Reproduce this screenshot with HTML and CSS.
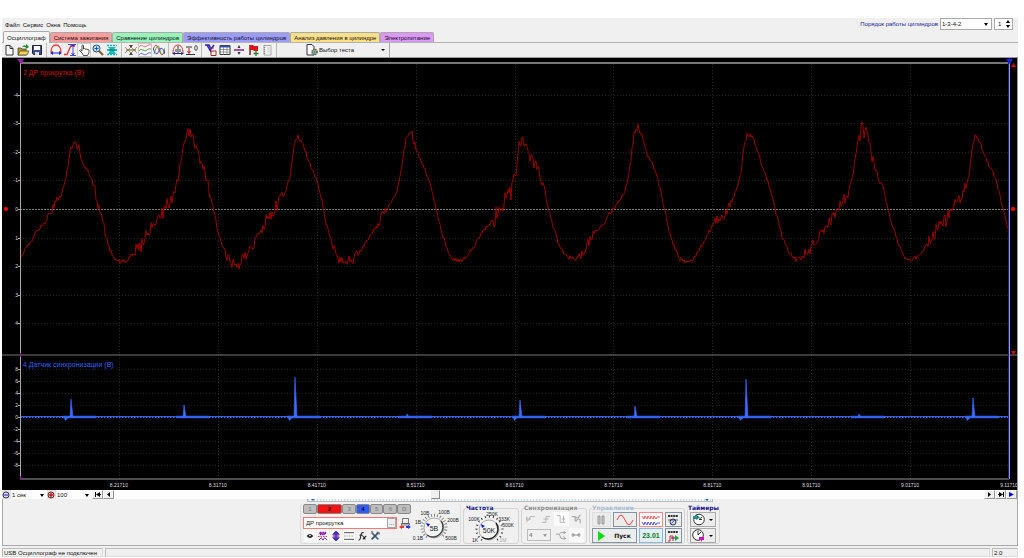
FILE: index.html
```html
<!DOCTYPE html>
<html lang="ru">
<head>
    <meta charset="UTF-8">
    <meta name="viewport" content="width=device-width, initial-scale=1.0">
    <title>USB Осциллограф</title>
    <link rel="stylesheet" href="styles.css">
</head>
<body>
    <div class="app">
        <header class="topbar">
            <nav class="menu">
                <a href="#">Файл</a>
                <a href="#">Сервис</a>
                <a href="#">Окна</a>
                <a href="#">Помощь</a>
            </nav>
            <div class="order">
                <label for="order">Порядок работы цилиндров</label>
                <span class="select order__select">
                    <select id="order"><option>1-3-4-2</option></select>
                </span>
                <span class="spin">
                    <input type="text" value="1" aria-label="Номер цилиндра">
                    <svg width="4" height="8" viewBox="0 0 4 8"><path d="M0 3 2 0 4 3zM0 5 2 8 4 5z"/></svg>
                </span>
            </div>
        </header>

        <div class="tabs">
            <button class="tab tab--active">Осциллограф</button>
            <button class="tab tab--red">Система зажигания</button>
            <button class="tab tab--green">Сравнение цилиндров</button>
            <button class="tab tab--blue">Эффективность работы цилиндров</button>
            <button class="tab tab--yellow">Анализ давления в цилиндре</button>
            <button class="tab tab--violet">Электропитание</button>
        </div>

        <div class="toolbar">
            <div class="toolbar__group">
                <button class="tool" aria-label="Новый"><svg viewBox="0 0 12 12"><path d="M3 1.500h4l3 3v6.500H3z" fill="#fff" stroke="#333"/><path d="M7 1.500v3h3" fill="none" stroke="#333"/></svg></button>
                <button class="tool" aria-label="Открыть"><svg viewBox="0 0 12 12"><path d="M1 11V4h3l1 1h4v6z" fill="#b99a1c" stroke="#333" stroke-width=".7"/><path d="M1 11 3 7h9l-2 4z" fill="#f4d34c" stroke="#333" stroke-width=".7"/><path d="M5 3q2-3 4-1V0l3 3-3 2V3.500Q7 2.500 5 3z" fill="#1a8b2d"/></svg></button>
                <button class="tool" aria-label="Сохранить"><svg viewBox="0 0 12 12"><path d="M1.500 1.500h9v9h-8l-1-1z" fill="#40508c" stroke="#223"/><path d="M3 2h6v4H3z" fill="#fff"/><path d="M4 8h4v3H4z" fill="#ddd"/></svg></button>
            </div>
            <div class="toolbar__group">
                <button class="tool" aria-label="Ширина"><svg viewBox="0 0 12 12"><path d="M1 8C1 4 3 1 6 1s5 3 5 7" fill="none" stroke="#f33" stroke-width="1.300"/><path d="M0 9l3-2v1.500h6V7l3 2-3 2V9.500H3V11z" fill="#22c"/></svg></button>
                <button class="tool" aria-label="Высота"><svg viewBox="0 0 12 12"><path d="M0 10.500h3L7 1.500h4" fill="none" stroke="#f33" stroke-width="1.300"/><path d="M9 1v10M7.500 3 9 1l1.500 2M7.500 9 9 11l1.500-2M6 11.500h6M4 .5h8" fill="none" stroke="#22c" stroke-width=".8"/></svg></button>
                <button class="tool tool--on" aria-label="Рука"><svg viewBox="0 0 12 12"><path d="M4 9 1.500 6.500q.5-1.500 2.500.500V1.500q1-1 1.500 0V5q1-1 1.700.200Q8.500 4.500 9 5.500q1.500-.5 2 .500v2.500L9.500 11.500h-4z" fill="#fff" stroke="#222" stroke-width=".8"/></svg></button>
                <button class="tool" aria-label="Лупа"><svg viewBox="0 0 12 12"><circle cx="4.500" cy="4.500" r="3.500" fill="#bfe5ff" stroke="#234a7c"/><path d="M7 7l4 4" stroke="#8a5520" stroke-width="2"/><path d="M2.500 4.500h4M4.500 2.500v4" stroke="#15a"/></svg></button>
                <button class="tool" aria-label="Сжать"><svg viewBox="0 0 12 12"><path d="M1 1.500h10M1 10.500h10" stroke="#1bb" stroke-width="1.500" stroke-dasharray="2 1"/><path d="M2 3h8L8 5h3v2H8l2 3H2l2-3H1V5h3z" fill="#13b9c4"/><path d="M3 6h6" stroke="#186a2a"/></svg></button>
            </div>
            <div class="toolbar__group">
                <button class="tool" aria-label="Центр"><svg viewBox="0 0 12 12"><path d="M0 3l3 3-3 3M12 3 9 6l3 3M3 6l3-3 3 3-3 3z" fill="none" stroke="#d66" stroke-width=".8"/><path d="M1 6h10" stroke="#282"/><path d="M4 1h4L6 4zM4 11h4L6 8z" fill="#444"/></svg></button>
                <button class="tool tool--on" aria-label="Слои"><svg viewBox="0 0 12 12"><path d="M0 3q2-3 4-1t4 0 4-1" fill="none" stroke="#e55" stroke-width=".8"/><path d="M0 7q2-3 4-1t4 0 4-1" fill="none" stroke="#292" stroke-width=".8"/><path d="M0 11q2-3 4-1t4 0 4-1" fill="none" stroke="#44d" stroke-width=".8"/></svg></button>
                <button class="tool" aria-label="Наложение"><svg viewBox="0 0 12 12"><path d="M0 6q3-10 6 0t6 0" fill="none" stroke="#e33" stroke-width=".9"/><path d="M1 10Q5-4 7 6t5-2" fill="none" stroke="#292" stroke-width=".7"/><path d="M0 4q3 10 6 3t6 3" fill="none" stroke="#33d" stroke-width=".9"/></svg></button>
            </div>
            <div class="toolbar__group">
                <button class="tool" aria-label="Маркеры"><svg viewBox="0 0 12 12"><path d="M1 9C1 4 3 1 6 1s5 3 5 8" fill="none" stroke="#d33"/><path d="M6 2v7M4 8V5M8 8V5" stroke="#333"/><path d="M0 9.500 3 8v1h6V8l3 1.500L9 11v-1H3v1z" fill="#229"/></svg></button>
                <button class="tool" aria-label="Ноль"><svg viewBox="0 0 12 12"><path d="M0 3h6M0 10.500h9" stroke="#333"/><path d="M3 4v5M1.500 7 3 9.500 4.500 7" fill="none" stroke="#b22"/><ellipse cx="10" cy="4" rx="1.300" ry="2.500" fill="none" stroke="#333" stroke-width=".8"/></svg></button>
            </div>
            <div class="toolbar__group">
                <button class="tool" aria-label="Фильтр"><svg viewBox="0 0 12 12"><path d="M0 1h4l2 4 3-4M2 1l4 7" fill="none" stroke="#22c" stroke-width="1.500"/><path d="M5 4h4" stroke="#d22"/><path d="M6 7h5v4.500H6z" fill="#fff" stroke="#a22"/></svg></button>
                <button class="tool" aria-label="Таблица"><svg viewBox="0 0 12 12"><path d="M1 1.500h10v9H1z" fill="#fff" stroke="#333"/><path d="M1 2.500h10" stroke="#35a" stroke-width="2"/><path d="M1 5.500h10M1 8h10M4.500 3v8M8 3v8" stroke="#777" stroke-width=".7"/></svg></button>
                <button class="tool" aria-label="Разделить"><svg viewBox="0 0 12 12"><path d="M1 6h10" stroke="#829" stroke-width="1.500"/><path d="M4.500 4h3L6 1zM4.500 8h3L6 11z" fill="#333"/></svg></button>
                <button class="tool" aria-label="Флаг"><svg viewBox="0 0 12 12"><path d="M3 1v10" stroke="#700" stroke-width="1.300"/><path d="M3 1h3l1 1h4v5H7L6 6H3z" fill="#e0101a"/><path d="M6.500 9.500h5M9 7v5" stroke="#1a8b2d" stroke-width="1.300"/></svg></button>
                <button class="tool" aria-label="Журнал"><svg viewBox="0 0 12 12"><path d="M3 1.500h7v9.500H3z" fill="#f6f6f6" stroke="#aaa"/><path d="M3.500 1v10" stroke="#888" stroke-width="1.500" stroke-dasharray="1 1"/><path d="M6 4h3M6 6h3M6 8h3" stroke="#ccc"/></svg></button>
            </div>
            <button class="test">
                <svg width="12" height="12" viewBox="0 0 12 12"><path d="M1 .5h5l2 2v8.500H1z" fill="#fff" stroke="#333"/><circle cx="8.500" cy="8" r="2.500" fill="#bcb" stroke="#4a6552" stroke-dasharray="1.500 .5" stroke-width="1.500"/><circle cx="8.500" cy="8" r="1" fill="#465"/></svg>
                <span>Выбор теста</span>
                <i class="caret"></i>
            </button>
        </div>

        <svg class="scope" id="scope"></svg>

        <div class="scroll">
            <button class="scroll__zoom" aria-label="Уменьшить"><svg width="8" height="8" viewBox="0 0 8 8"><circle cx="4" cy="4" r="3" fill="#dde" stroke="#336"/><path d="M2 4h4" stroke="#22a"/></svg></button>
            <span class="select scroll__select"><select aria-label="Развёртка"><option>1 сек</option></select></span>
            <button class="scroll__zoom" aria-label="Увеличить"><svg width="8" height="8" viewBox="0 0 8 8"><circle cx="4" cy="4" r="3" fill="#fdd" stroke="#522"/><path d="M2 4h4M4 2v4" stroke="#c11" stroke-width="1.500"/></svg></button>
            <span class="select scroll__select"><select aria-label="Масштаб"><option>100</option></select></span>
            <button class="scroll__btn" aria-label="В начало"><svg width="6" height="5" viewBox="0 0 6 5"><path d="M0 0h1v5H0zM5 0v5L1 2.500zM5 2h1v1H5z"/></svg></button>
            <button class="scroll__btn" aria-label="Назад"><svg width="3" height="5" viewBox="0 0 3 5"><path d="M3 0v5L0 2.500z"/></svg></button>
            <input class="scroll__bar" type="range" min="0" max="1000" value="368" aria-label="Позиция">
            <button class="scroll__btn" aria-label="Вперёд"><svg width="3" height="5" viewBox="0 0 3 5"><path d="M0 0v5l3-2.500z"/></svg></button>
            <button class="scroll__btn" aria-label="В конец"><svg width="6" height="5" viewBox="0 0 6 5"><path d="M5 0h1v5H5zM1 0v5l4-2.500zM0 2h1v1H0z"/></svg></button>
            <button class="scroll__btn" aria-label="Воспроизвести"><svg width="5" height="5" viewBox="0 0 5 5"><path d="M0 0v5l5-2.500z" fill="#00f"/></svg></button>
        </div>

        <div class="panel">
            <div class="splitter"><i></i><i></i></div>
            <div class="controls">
                <section class="channel">
                    <div class="channel__main">
                        <div class="channel__tabs">
                            <button>1</button><button class="is-red">2</button><button>3</button><button class="is-blue">4</button><button>5</button><button>6</button><button>D</button>
                        </div>
                        <div class="channel__row">
                            <div class="channel__name">
                                <input type="text" value="ДР прокрутка" aria-label="Название канала">
                                <button>...</button>
                            </div>
                            <svg width="12" height="12" viewBox="0 0 12 12"><path d="M3.500 1.500h6v5h-6zM2.500 6.500h8v1.500h-8z" fill="#eee" stroke="#555" stroke-width=".8"/><path d="M5 9v2H3v1L0 10l3-2v1z" fill="#e33"/><path d="M7 9v2h2v1l3-2-3-2v1z" fill="#33d"/></svg>
                        </div>
                        <div class="channel__tools">
                            <button class="on" aria-label="Видимость"><svg viewBox="0 0 12 12"><path d="M2 6q4-5 8 0-4 5-8 0z" fill="#222"/><circle cx="6" cy="5.500" r="1" fill="#fff"/></svg></button>
                            <button class="on" aria-label="Сглаживание"><svg viewBox="0 0 12 12"><path d="M1 4l2-3v4l2-4v4l2-4v4l2-4v3" fill="none" stroke="#70a"/><path d="M0 6.500h12" stroke="#c22" stroke-dasharray="2 1"/><path d="M1 11l3-3 2 3 2-3 3 3" fill="none" stroke="#70a"/></svg></button>
                            <button class="on" aria-label="Инверсия"><svg viewBox="0 0 12 12"><path d="M6 0l4 4H7v4h3l-4 4-4-4h3V4H2z" fill="#33d" stroke="#33d"/><path d="M2 6h8" stroke="#d22" stroke-width="1.500"/></svg></button>
                            <button class="on" aria-label="Линии"><svg viewBox="0 0 12 12"><path d="M0 2h12M0 10h12" stroke="#333"/><path d="M0 6h12" stroke="#777" stroke-dasharray="1 1"/></svg></button>
                            <button aria-label="Функция"><svg viewBox="0 0 12 12"><path d="M2 11q2 0 2.500-5T8 2M3 5h4M7 6l3 4M11 6 7 10" fill="none" stroke="#222" stroke-width="1.300"/></svg></button>
                            <button aria-label="Настройка"><svg viewBox="0 0 12 12"><path d="M2 2l8 8" stroke="#567" stroke-width="2"/><path d="M10 2 2 10" stroke="#35506c" stroke-width="2"/><path d="M1 1h3M8 1.500h3v3" fill="none" stroke="#456"/></svg></button>
                        </div>
                    </div>
                    <svg class="dial" width="48" height="38" viewBox="0 0 48 38">
                        <path d="M16 33A12 12 0 1 1 30 33" fill="none" stroke="#888" stroke-width="3" stroke-dasharray="1 2"/><circle cx="23" cy="24" r="10" fill="#f5f5f5" stroke="#aaa"/><path d="M30 17A10 10 0 0 1 16 31" fill="none" stroke="#444" stroke-width="1.500"/>
                        <path d="M15 19l4 1-2 3z" fill="#11f"/>
                        <text class="dial__value" x="23" y="27">5В</text>
                        <text x="14" y="11">10В</text><text x="33" y="10">100В</text><text x="7" y="20">1В</text><text x="42" y="18">200В</text><text x="7" y="36">0.1В</text><text x="40" y="36">500В</text>
                    </svg>
                </section>

                <fieldset class="box">
                    <legend>Частота</legend>
                    <svg class="dial" width="50" height="32" viewBox="0 0 50 32">
                        <path d="M16 28A13 13 0 1 1 31 28" fill="none" stroke="#333" stroke-width="2" stroke-dasharray="1 3"/><circle cx="23" cy="18" r="10" fill="#f5f5f5" stroke="#aaa"/><path d="M30 11A10 10 0 0 1 16 25" fill="none" stroke="#222" stroke-width="1.500"/>
                        <path d="M15 12l4 2-3 2z" fill="#11f"/>
                        <text class="dial__value" x="23" y="21">50K</text>
                        <text x="26" y="4">250K</text><text x="8" y="9">100K</text><text x="38" y="9">333K</text><text x="42" y="15">500K</text><text x="9" y="30">1K</text><text class="dim" x="37" y="30">1M</text>
                    </svg>
                </fieldset>

                <fieldset class="box box--dim" disabled>
                    <legend>Синхронизация</legend>
                    <div class="sync">
                        <button aria-label="Фронт"><svg viewBox="0 0 12 12"><path d="M1 3v6q3-1 4-6h6M0 6h6" fill="none" stroke="#aaa"/></svg></button>
                        <button aria-label="Подъём"><svg viewBox="0 0 12 12"><path d="M1 10h5V3h5M3 6h6" fill="none" stroke="#aaa"/></svg></button>
                        <button class="on" aria-label="Спад"><svg viewBox="0 0 12 12"><path d="M1 2h4v8h6M9 2v7M7 6h4" fill="none" stroke="#aaa"/></svg></button>
                        <button aria-label="Ручная"><svg viewBox="0 0 12 12"><path d="M1 3h4v6M6 9l5-8M6 4l5 3v4" fill="none" stroke="#aaa" stroke-width="1.500"/></svg></button>
                        <span class="select sync__select"><select aria-label="Канал синхронизации"><option>4</option></select></span>
                        <button aria-label="Уровень"><svg viewBox="0 0 12 12"><path d="M0 5h4l2-2h6M4 5l2 5h6M9 1l2 2-2 2M9 8l2 2-2 2" fill="none" stroke="#999"/></svg></button>
                        <button class="on" aria-label="Сдвиг"><svg viewBox="0 0 12 12"><path d="M0 6h12M2 4l3 2-3 2zM10 4 7 6l3 2z" fill="#aaa" stroke="#aaa"/></svg></button>
                    </div>
                </fieldset>

                <fieldset class="box box--run">
                    <legend>Управление</legend>
                    <div class="run">
                        <button class="off" aria-label="Пауза"><svg width="8" height="10" viewBox="0 0 8 10"><path d="M1 1h2v8H1zM5 1h2v8H5z" fill="#ccc" stroke="#999"/></svg></button>
                        <button aria-label="Синус"><svg width="18" height="12" viewBox="0 0 18 12"><path d="M1 6q4-10 8 0t8 0" fill="none" stroke="#f44"/></svg></button>
                        <button class="run__red" aria-label="Поток"><svg width="20" height="12" viewBox="0 0 20 12"><path d="M1 2l2 3 1-3 2 3 1-3 2 3 1-3 2 3 1-3 2 3 1-2h3" fill="none" stroke="#e33" stroke-width=".8"/><path d="M1 8l2 3 1-3 2 3 1-3 2 3 1-3 2 3 1-3 2 3 1-2h3" fill="none" stroke="#33d" stroke-width=".8"/></svg></button>
                        <button aria-label="Авто"><svg width="12" height="12" viewBox="0 0 12 12"><path d="M1 2h10" stroke="#333" stroke-width="2" stroke-dasharray="2 .6"/><circle cx="6" cy="8" r="3" fill="#cde" stroke="#335"/><path d="M1 6h10M4.500 9.500l3-3" stroke="#335" stroke-width=".8"/></svg></button>
                        <button class="run__start"><svg width="7" height="10" viewBox="0 0 7 10"><path d="M0 0v10l7-5z" fill="#0d1"/></svg>Пуск</button>
                        <button class="run__time">23.01</button>
                        <button aria-label="Автозапуск"><svg width="12" height="12" viewBox="0 0 12 12"><path d="M1 2h10" stroke="#333" stroke-width="2" stroke-dasharray="2 .6"/><path d="M1 11h2V6h3v5" fill="none" stroke="#d22"/><path d="M4 8h4" stroke="#22c"/><path d="M8 5v6l4-3z" fill="#1a3"/></svg></button>
                    </div>
                </fieldset>

                <fieldset class="box box--timers">
                    <legend>Таймеры</legend>
                    <div class="timers">
                        <button aria-label="Таймер старта"><svg width="13" height="13" viewBox="0 0 13 13"><circle cx="7" cy="6.500" r="5.300" fill="#fff" stroke="#333"/><path d="M7 6.500 10 4M7 6.500h3" stroke="#333"/><path d="M1 3h3V1l4 3.500L4 7V6H1z" fill="#2a8c86"/></svg><i class="caret"></i></button>
                        <button aria-label="Таймер остановки"><svg width="13" height="13" viewBox="0 0 13 13"><circle cx="6" cy="6" r="5.300" fill="#fff" stroke="#333"/><path d="M6 6l3-3M6 6V2" stroke="#333"/><path d="M7 8h5v3h-2l-.5 2-1-2H7z" fill="#c1b"/></svg><i class="caret"></i></button>
                    </div>
                </fieldset>
            </div>
        </div>

        <footer class="status">
            <span class="status__text">USB Осциллограф не подключен</span>
            <span class="status__fill"></span>
            <span class="status__version">2.0</span>
        </footer>
    </div>
    <script src="script.js"></script>
</body>
</html>
```
FILE: styles.css
```css
* {
    margin: 0;
    padding: 0;
    box-sizing: border-box;
}

body {
    background: #fff;
    font-family: "Liberation Sans", Arial, sans-serif;
    font-size: 6px;
    line-height: 8px;
    color: #111;
}

button,
input,
select {
    font: inherit;
    color: inherit;
    border: 0;
    border-radius: 0;
    background: none;
    min-width: 0;
    appearance: none;
    outline: none;
}

a {
    color: inherit;
    text-decoration: none;
}

svg {
    display: block;
    flex: none;
}

.app {
    margin: 18px 6px 0 2px;
    background: #f0f0f0;
}

.caret {
    border: 2px solid transparent;
    border-top-color: #000;
    border-bottom: 0;
}

.select {
    position: relative;
    display: block;
}

.select select {
    display: block;
    width: 100%;
    height: 100%;
    padding-left: 1px;
}

.select::after {
    content: '';
    position: absolute;
    right: 3px;
    top: 4px;
    border: 2px solid transparent;
    border-top: 3px solid #000;
    border-bottom: 0;
    pointer-events: none;
}

/* Menu and cylinder order */
.topbar {
    display: flex;
    justify-content: space-between;
    height: 13px;
}

.menu {
    display: flex;
    gap: 3px;
    padding: 3px;
}

.order {
    display: flex;
    gap: 2px;
    padding-right: 5px;
    height: 12px;
}

.order label {
    color: #22229c;
    padding-top: 2px;
}

.order__select {
    width: 52px;
    border: 1px solid #aaa;
    background: #fff;
}

.spin {
    display: flex;
    align-items: center;
    width: 19px;
    border: 1px solid #aaa;
    background: #fff;
}

.spin input {
    width: 11px;
    padding-left: 3px;
}

/* Tabs */
.tabs {
    display: flex;
    height: 12px;
    padding-left: 1px;
    align-items: flex-end;
    border-bottom: 1px solid #b4b4b4;
}

.tab {
    height: 10px;
    padding: 0 3px;
    border: 1px solid #aaa;
    border-bottom: 0;
    border-radius: 2px 2px 0 0;
    white-space: nowrap;
}

.tab--active {
    height: 12px;
    margin-bottom: -1px;
    background: #f6f6f6;
}

.tab--red { background: #ff9c9c; }
.tab--green { background: #98f3ba; }
.tab--blue { background: #9c9cff; }
.tab--yellow { background: #ffdf87; }
.tab--violet { background: #dc97fa; }

/* Toolbar */
.toolbar {
    display: flex;
    height: 15px;
    border-bottom: 1px solid #999;
}

.toolbar__group {
    display: flex;
    padding-right: 2px;
    margin-right: 2px;
    border-right: 1px solid #bbb;
}

.tool {
    width: 14px;
    height: 14px;
    padding: 1px;
}

.tool svg {
    width: 12px;
    height: 12px;
}

.tool--on {
    background: #fafafa;
    border: 1px solid #ccc;
    padding: 0;
}

.test {
    display: flex;
    align-items: center;
    gap: 1px;
    width: 111px;
    padding: 0 4px 0 27px;
    border-right: 1px solid #aaa;
}

.test .caret {
    margin-left: auto;
}

/* Scope */
.scope {
    width: 100%;
    height: 432px;
    background: #000;
    border-right: 1px solid #999;
}

.scope text {
    font-size: 5px;
    fill: #ddd;
}

.scope .scope__title {
    font-size: 7px;
}

/* Scroll row */
.scroll {
    display: flex;
    height: 9px;
    background: #fdfdfd;
    border-right: 1px solid #aaa;
}

.scroll__zoom {
    width: 9px;
    background: #e4e4e4;
}

.scroll__select {
    width: 36px;
}

.scroll__btn {
    display: flex;
    align-items: center;
    justify-content: center;
    width: 11px;
    background: #f0f0f0;
    border: 1px solid #fff;
    border-right-color: #999;
    border-bottom-color: #999;
}

.scroll__bar {
    flex: 1;
    height: 9px;
}

.scroll__bar::-webkit-slider-thumb {
    appearance: none;
    width: 9px;
    height: 9px;
    background: #f0f0f0;
    border: 1px solid #eee;
    border-right-color: #888;
    border-bottom-color: #888;
}

/* Bottom panel */
.panel {
    border: 1px solid #aaa;
    border-width: 0 1px 1px;
    padding-bottom: 1px;
}

.splitter {
    display: flex;
    justify-content: space-between;
    align-items: center;
    width: 406px;
    max-width: 100%;
    height: 3px;
    margin: 0 auto 2px;
    padding: 0 3px;
    border: 1px solid #bbb;
    border-width: 0 1px 1px;
    background: repeating-linear-gradient(90deg, #c3dbf5 0 1px, #f2f7fd 1px 3px);
}

.splitter i {
    border: 2px solid transparent;
    border-top-color: #27c;
    border-bottom: 0;
}

.controls {
    display: flex;
    justify-content: center;
    gap: 2px;
    height: 40px;
}

.channel {
    display: flex;
    width: 161px;
    border: 1px solid #ddd;
    border-top: 0;
    padding: 0 2px;
    border-radius: 3px;
}

.channel__main {
    width: 110px;
}

.channel__tabs {
    display: flex;
}

.channel__tabs button {
    flex: 1;
    height: 10px;
    background: #bdbdbd;
    border: 1px solid #888;
    border-radius: 2px;
    color: #777;
}

.channel__tabs .is-red {
    flex: 2;
    background: #f01414;
    color: #200;
    font-weight: bold;
}

.channel__tabs .is-blue {
    background: #2f5cf5;
    color: #002;
    font-weight: bold;
}

.channel__row {
    display: flex;
    gap: 2px;
    margin-top: 3px;
}

.channel__name {
    display: flex;
    width: 94px;
    height: 12px;
    border: 1px solid #f77;
    background: #fff;
}

.channel__name input {
    flex: 1;
    padding-left: 2px;
}

.channel__name button {
    width: 9px;
    background: #eee;
    border: 1px solid #aaa;
    line-height: 4px;
}

.channel__tools {
    display: flex;
    gap: 1px;
    padding-left: 1px;
}

.channel__tools button {
    width: 12px;
    height: 13px;
}

.channel__tools .on,
.sync .on {
    background: #fafafa;
}

.channel__tools svg,
.sync svg {
    width: 10px;
    height: 10px;
    margin: auto;
}

.dial text {
    font-size: 5px;
    text-anchor: middle;
    fill: #222;
}

.dial .dial__value {
    font-size: 7px;
}

.dial .dim {
    fill: #aaa;
}

.box {
    display: block;
    min-width: 0;
    height: 40px;
    padding: 0 2px;
    border: 1px solid #d4d4d4;
    border-radius: 3px;
}

.box legend {
    font-family: "DejaVu Sans", Verdana, sans-serif;
    font-size: 6px;
    font-weight: bold;
    line-height: 8px;
    color: #11118c;
}

.box--dim legend { color: #8c8c8c; }
.box--run legend { color: #a3b9cf; }

.box--timers {
    padding: 0;
}

.sync {
    display: grid;
    grid-template-columns: repeat(4, 15px);
    grid-template-rows: 14px 14px;
    row-gap: 2px;
}

.sync__select {
    grid-column: span 2;
    margin: 1px 3px;
    border: 1px solid #bbb;
    color: #555;
    font-weight: bold;
}

.sync__select::after {
    border-top-color: #999;
}

.run {
    display: grid;
    grid-template-columns: 19px 24px 24px 17px;
    grid-template-rows: 15px 15px;
    gap: 1px 2px;
}

.run button,
.timers button {
    display: flex;
    align-items: center;
    justify-content: center;
    border: 1px solid #8295a6;
    background: #ececec;
}

.run .off {
    border-color: #ddd;
}

.run .run__red {
    border-color: #f88;
    background: #fff;
}

.run .run__start {
    grid-column: span 2;
    gap: 9px;
    font: bold 6px/8px "DejaVu Sans", Verdana, sans-serif;
}

.run .run__time {
    background: #e3f0fa;
    border-color: #8ab8dc;
    color: #0a7a20;
    font-size: 7px;
    font-weight: bold;
}

.timers {
    display: grid;
    grid-template-rows: 15px 15px;
    gap: 1px;
    padding-left: 2px;
}

.timers button {
    width: 26px;
    gap: 4px;
    border-color: #aaa;
}

/* Status bar */
.status {
    display: flex;
    gap: 2px;
    padding-top: 2px;
    height: 11px;
}

.status span {
    border: 1px solid #ddd;
    border-top-color: #bbb;
    border-left-color: #bbb;
    padding-left: 1px;
}

.status__text {
    width: 101px;
    white-space: nowrap;
}

.status__fill {
    flex: 1;
}

.status__version {
    width: 26px;
}
```
FILE: script.js
```javascript
const scope = document.getElementById('scope');

const LEFT = 18;
const RIGHT = 8;
const SPAN = 989;       // samples on screen
const RED_ZERO = 151;
const RED_STEP = 28.6;
const BLUE_ZERO = 359;
const BLUE_STEP = 11.9;
const SPLIT = 297;
const BOTTOM = 421;

// cranking sensor: sample, offset from the top of the scope
const red = [
    [0,200],[10,185],[18,171],[25,165],[32,151],[38,141],[42,135],[45,124],[48,108],[51,89],[53,84],[59,89],[63,105],[70,118],[75,132],[78,147],
    [82,162],[86,179],[90,192],[95,201],[100,204],[107,202],[114,194],[120,189],[128,175],[135,165],[141,158],[146,148],[153,139],[157,127],
    [160,110],[163,90],[166,77],[168,73],[172,78],[177,94],[183,109],[188,127],[193,148],[198,174],[203,192],[209,202],[215,207],[220,205],
    [228,196],[236,180],[245,164],[252,158],[257,148],[264,138],[270,120],[273,97],[275,84],[278,79],[283,86],[288,102],[296,120],[302,142],
    [306,165],[311,182],[317,199],[323,203],[333,202],[340,193],[350,178],[356,168],[362,159],[369,147],[376,136],[380,120],[383,100],[385,84],
    [387,74],[392,74],[397,93],[405,111],[411,128],[416,150],[421,172],[427,191],[433,201],[440,203],[446,199],[454,189],[462,174],[470,165],
    [479,153],[485,142],[491,134],[495,117],[499,92],[501,78],[505,84],[510,97],[517,111],[523,127],[528,148],[533,168],[539,187],[545,198],
    [555,201],[563,194],[571,182],[576,172],[583,168],[589,156],[598,145],[605,133],[609,114],[612,94],[614,76],[617,68],[621,74],[626,93],
    [634,110],[640,130],[645,153],[649,174],[655,191],[660,201],[667,204],[675,199],[683,185],[690,172],[696,162],[705,157],[711,143],
    [717,131],[721,115],[724,89],[727,77],[732,78],[737,92],[743,110],[750,130],[756,155],[762,178],[769,194],[776,202],[783,200],[791,189],
    [799,178],[806,166],[813,159],[819,149],[828,136],[833,115],[836,94],[839,79],[842,70],[846,74],[850,92],[857,110],[864,132],[870,160],
    [877,182],[884,199],[891,202],[899,198],[908,185],[918,170],[926,162],[935,147],[944,135],[949,116],[952,92],[955,77],[960,85],[966,101],
    [972,112],[977,126],[983,151],[989,174]
];

// rough stretches of the red trace: from, to, extra amplitude
const rough = [
    [28,42,2], [52,62,3], [74,84,4], [114,160,5], [166,190,3], [203,236,4], [242,262,5], [312,338,3], [356,366,4], [384,396,4],
    [474,502,8], [504,526,4], [558,574,4], [612,622,3], [694,712,2], [785,828,4], [838,860,6], [908,946,5]
];

// sync sensor: sample and height of every tooth
const teeth = [[51, 18], [164, 12], [275, 40], [387, 3], [500, 17], [615, 11], [726, 38], [839, 3], [953, 19]];

// repeatable noise, so a redraw gives the same trace
function noise(i) {
    const s = Math.sin(i * 127.1 + 3.7) * 43758.5453;
    return (s - Math.floor(s)) * 2 - 1;
}

function redTrace(x) {
    let d = '';
    let k = 0;
    for (let i = 0; i <= SPAN; i++) {
        while (k < red.length - 2 && red[k + 1][0] < i) k++;
        const [x0, y0] = red[k];
        const [x1, y1] = red[k + 1];
        const y = y0 + (y1 - y0) * (i - x0) / (x1 - x0);
        const zone = rough.find(([from, to]) => i >= from && i <= to);
        const amp = 2 + (zone ? zone[2] : 0);
        d += (i ? 'L' : 'M') + x(i).toFixed(1) + ' ' + (y + noise(i) * amp).toFixed(1);
    }
    return d;
}

function line(x1, y1, x2, y2, color, extra = '') {
    return `<path d="M${x1} ${y1}L${x2} ${y2}" stroke="${color}" fill="none" ${extra}/>`;
}

function draw() {
    const width = scope.clientWidth;
    const end = width - RIGHT;
    const x = i => LEFT + i * (end - LEFT) / SPAN;
    const dots = 'stroke-dasharray="1 2" shape-rendering="crispEdges"';
    let out = '';

    for (let i = 1; i < 10; i++) {
        const gx = Math.round(x(i * 98.9)) + 0.5;
        out += line(gx, 6, gx, BOTTOM, '#262626', dots);
    }
    for (let v = -4; v <= 4; v++) {
        const y = Math.round(RED_ZERO + v * RED_STEP);
        out += line(LEFT, y + 0.5, end, y + 0.5, v ? '#202020' : '#777', v ? dots : 'stroke-dasharray="2 1"');
        out += line(LEFT - 2, y + 0.5, LEFT, y + 0.5, '#aaa');
        out += `<text x="${LEFT - 2}" y="${y + 2}" text-anchor="end">${v}</text>`;
    }
    for (let v = 8; v >= -8; v -= 2) {
        const y = Math.round(BLUE_ZERO - v / 2 * BLUE_STEP);
        out += line(LEFT, y + 0.5, end, y + 0.5, v ? '#202020' : '#999', dots);
        out += line(LEFT - 2, y + 0.5, LEFT, y + 0.5, '#aaa');
        out += `<text x="${LEFT - 2}" y="${y + 2}" text-anchor="end">${v}</text>`;
    }
    for (let i = 1; i <= 10; i++) {
        out += `<text x="${x(i * 98.9)}" y="429" text-anchor="middle">${(8.1171 + i * 0.1).toFixed(5)}</text>`;
    }

    out += `<path d="${redTrace(x)}" fill="none" stroke="#b80000" stroke-width=".8"/>`;

    out += line(LEFT, BLUE_ZERO - 0.5, end, BLUE_ZERO - 0.5, '#2f62f0');
    out += line(LEFT, BLUE_ZERO + 0.5, end, BLUE_ZERO + 0.5, '#2f62f0', 'stroke-dasharray="2 1" opacity=".6"');
    teeth.forEach(([t, h]) => {
        const px = x(t);
        out += line(x(t - 8), BLUE_ZERO, x(Math.min(t + 25, SPAN)), BLUE_ZERO, '#2f62f0', 'stroke-width="2.500"');
        if (h > 15) {
            out += `<path d="M${px - 7} ${BLUE_ZERO}l1 4 4-4z" fill="#3a6cff"/>`;
        }
        out += `<path d="M${px - 1} ${BLUE_ZERO}L${px} ${BLUE_ZERO - h}L${px + 1} ${BLUE_ZERO - h / 2}L${px + 2} ${BLUE_ZERO}z" fill="#3a6cff" stroke="#3a6cff" stroke-width=".6"/>`;
    });

    // frame and cursors
    out += line(LEFT, 5, end, 5, '#777', 'stroke-width="2"');
    out += line(0, SPLIT, width, SPLIT, '#777');
    out += line(LEFT + 0.5, 4, LEFT + 0.5, BOTTOM, '#aaa');
    out += line(LEFT, BOTTOM, end, BOTTOM, '#999');
    out += line(end - 0.5, 4, end - 0.5, BOTTOM, '#1a1a9c');
    out += line(end + 0.5, 4, end + 0.5, BOTTOM, '#9c9cc4');
    out += line(LEFT + 0.5, SPLIT - 2, LEFT + 0.5, SPLIT + 2, '#909');
    out += line(LEFT + 0.5, BOTTOM - 3, LEFT + 0.5, BOTTOM, '#909');
    out += `<path d="M${LEFT - 3} 1h7l-3 5z" fill="#a020b0"/>`;
    out += `<path d="M${end - 3} 1h7l-3 5z" fill="#2222ee"/>`;
    out += `<circle cx="4" cy="${RED_ZERO}" r="2" fill="#f00"/><circle cx="${end + 4}" cy="${RED_ZERO}" r="2" fill="#f00"/>`;
    out += `<path d="M${end + 2} 9h5l-2.500-4zM${end + 2} ${SPLIT - 4}h5l-2.500 4z" fill="#d00"/>`;

    out += `<text class="scope__title" x="21" y="17" style="fill:#d00000">2 ДР прокрутка (В)</text>`;
    out += `<text class="scope__title" x="21" y="309" style="fill:#2f62f0">4 Датчик синхронизации (В)</text>`;
    scope.innerHTML = out;
}

draw();
window.addEventListener('resize', draw);
```
